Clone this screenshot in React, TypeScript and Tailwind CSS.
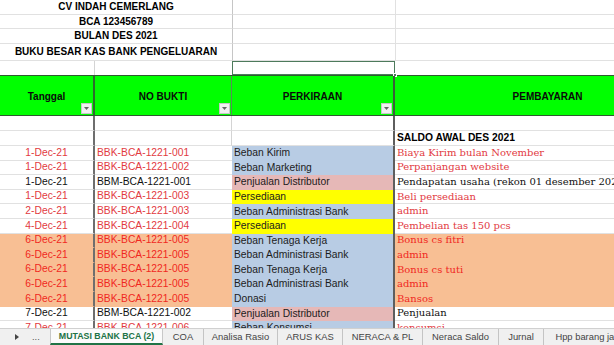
const RED = "text-[#e23a3f]";
const RED_O = "text-[#f0281f]";

type Row = {
  tgl: string;
  bukti: string;
  akun: string;
  akunBg: string;
  bayar: string;
  red: boolean;
  orange?: boolean;
};

const rows: Row[] = [
  { tgl: "1-Dec-21", bukti: "BBK-BCA-1221-001", akun: "Beban Kirim", akunBg: "blue", bayar: "Biaya Kirim bulan November", red: true },
  { tgl: "1-Dec-21", bukti: "BBK-BCA-1221-002", akun: "Beban Marketing", akunBg: "blue", bayar: "Perpanjangan website", red: true },
  { tgl: "1-Dec-21", bukti: "BBM-BCA-1221-001", akun: "Penjualan Distributor", akunBg: "pink", bayar: "Pendapatan usaha (rekon 01 desember 2021)", red: false },
  { tgl: "1-Dec-21", bukti: "BBK-BCA-1221-003", akun: "Persediaan", akunBg: "yellow", bayar: "Beli persediaan", red: true },
  { tgl: "2-Dec-21", bukti: "BBK-BCA-1221-003", akun: "Beban Administrasi Bank", akunBg: "blue", bayar: "admin", red: true },
  { tgl: "4-Dec-21", bukti: "BBK-BCA-1221-004", akun: "Persediaan", akunBg: "yellow", bayar: "Pembelian tas 150 pcs", red: true },
  { tgl: "6-Dec-21", bukti: "BBK-BCA-1221-005", akun: "Beban Tenaga Kerja", akunBg: "blue", bayar: "Bonus cs fitri", red: true, orange: true },
  { tgl: "6-Dec-21", bukti: "BBK-BCA-1221-005", akun: "Beban Administrasi Bank", akunBg: "blue", bayar: "admin", red: true, orange: true },
  { tgl: "6-Dec-21", bukti: "BBK-BCA-1221-005", akun: "Beban Tenaga Kerja", akunBg: "blue", bayar: "Bonus cs tuti", red: true, orange: true },
  { tgl: "6-Dec-21", bukti: "BBK-BCA-1221-005", akun: "Beban Administrasi Bank", akunBg: "blue", bayar: "admin", red: true, orange: true },
  { tgl: "6-Dec-21", bukti: "BBK-BCA-1221-005", akun: "Donasi", akunBg: "blue", bayar: "Bansos", red: true, orange: true },
  { tgl: "7-Dec-21", bukti: "BBM-BCA-1221-002", akun: "Penjualan Distributor", akunBg: "pink", bayar: "Penjualan", red: false },
  { tgl: "7-Dec-21", bukti: "BBK-BCA-1221-006", akun: "Beban Konsumsi", akunBg: "blue", bayar: "konsumsi", red: true },
];

const akunBgClass: Record<string, string> = {
  blue: "bg-[#b8cce4]",
  pink: "bg-[#e6b8b7]",
  yellow: "bg-[#ffff00]",
};

function FilterBtn() {
  return (
    <span className="absolute right-[1px] bottom-[1px] w-[11px] h-[11px] bg-[#f2f2f2] border border-[#c8c8c8] flex items-center justify-center">
      <svg width="5" height="3" viewBox="0 0 5 3">
        <path d="M0 0 L5 0 L2.5 3 Z" fill="#666" />
      </svg>
    </span>
  );
}

const sans = "font-['Liberation_Sans',Arial,sans-serif]";
const serif = "font-['DejaVu_Serif',serif]";

function TitleRow({ text, h }: { text: string; h: string }) {
  return (
    <div className={`flex ${h}`}>
      <div className="w-[232px] shrink-0 border-b border-[#e1e1e1] flex items-center justify-center text-[10px] font-bold text-black">
        {text}
      </div>
      <div className="w-[163px] shrink-0 border-l border-[#c6c6c6] border-b border-b-[#e1e1e1]" />
      <div className="flex-1 border-l border-[#e1e1e1] border-b border-b-[#e1e1e1]" />
    </div>
  );
}

function DataRow({ r }: { r: Row }) {
  const bg = r.orange ? "bg-[#f8bf94] border-transparent" : "bg-white border-[#e1e1e1]";
  const txt = r.red ? (r.orange ? RED_O : RED) : "text-[#111]";
  return (
    <div className="flex h-[14.6px] text-[10.3px] leading-none">
      <div className={`w-[95px] shrink-0 border-b ${bg} border-r-2 border-r-[#6e6e6e] flex items-center justify-center ${txt}`}>
        {r.tgl}
      </div>
      <div className={`w-[137px] shrink-0 border-b ${bg} flex items-center pl-[2px] ${txt}`}>{r.bukti}</div>
      <div className={`w-[163px] shrink-0 ${akunBgClass[r.akunBg]} border-r-2 border-r-[#5e5e5e] flex items-center pl-[2px] text-[#1c1c1c]`}>
        {r.akun}
      </div>
      <div className={`flex-1 border-b ${bg} flex items-center pl-[2px] whitespace-nowrap overflow-hidden ${serif} text-[10px] ${txt}`}>
        {r.bayar}
      </div>
    </div>
  );
}

const tabs = [
  { name: "COA", w: "w-[40px]" },
  { name: "Analisa Rasio", w: "w-[74px]" },
  { name: "ARUS KAS", w: "w-[65px]" },
  { name: "NERACA & PL", w: "w-[80px]" },
  { name: "Neraca Saldo", w: "w-[76px]" },
  { name: "Jurnal", w: "w-[45px]" },
  { name: "Hpp barang jadi", w: "w-[90px]" },
];

export default function App() {
  return (
    <div className={`w-[614px] h-[345px] overflow-hidden bg-white flex flex-col ${sans}`}>
      <div className="h-[328px] overflow-hidden shrink-0">
        <TitleRow text="CV INDAH CEMERLANG" h="h-[14.5px]" />
        <TitleRow text="BCA 123456789" h="h-[14.5px]" />
        <TitleRow text="BULAN DES 2021" h="h-[14.5px]" />
        <TitleRow text="BUKU BESAR KAS BANK PENGELUARAN" h="h-[17.5px]" />
        {/* row 5 with selected cell */}
        <div className="flex h-[14px]">
          <div className="w-[95px] shrink-0 border-r border-[#d4d4d4]" />
          <div className="w-[137px] shrink-0" />
          <div className="w-[163px] shrink-0 relative border-[1.5px] border-[#4d7a5c]">
            <span className="absolute -right-[3px] -bottom-[3px] w-[4px] h-[4px] bg-[#4d7a5c] border border-white" />
          </div>
          <div className="flex-1" />
        </div>

        {/* header */}
        <div className="flex h-[41px] bg-[#00ff00] border-y-[1.5px] border-[#2f5a2f] text-[10px] font-bold text-[#0a0a0a]">
          <div className="w-[95px] shrink-0 relative border-r-2 border-[#2d6a2d] flex items-center justify-center pt-[2px]">
            Tanggal
            <FilterBtn />
          </div>
          <div className="w-[137px] shrink-0 relative border-r border-[#5a8a5a] flex items-center justify-center pt-[2px]">
            NO BUKTI
            <FilterBtn />
          </div>
          <div className="w-[163px] shrink-0 relative border-r-2 border-[#3b5e3b] flex items-center justify-center pt-[2px]">
            PERKIRAAN
            <FilterBtn />
          </div>
          <div className="w-[305px] shrink-0 flex items-center justify-center pt-[2px]">PEMBAYARAN</div>
        </div>

        {/* empty row + saldo */}
        <div className="flex h-[15px]">
          <div className="w-[95px] shrink-0 border-b border-[#e1e1e1] border-r-2 border-r-[#6e6e6e]" />
          <div className="w-[137px] shrink-0 border-b border-[#e1e1e1] border-r border-r-[#d4d4d4]" />
          <div className="w-[163px] shrink-0 border-b border-[#e1e1e1] border-r-2 border-r-[#5e5e5e]" />
          <div className="flex-1 border-b border-[#e1e1e1]" />
        </div>
        <div className="flex h-[15px]">
          <div className="w-[95px] shrink-0 border-b border-[#e1e1e1] border-r-2 border-r-[#6e6e6e]" />
          <div className="w-[137px] shrink-0 border-b border-[#e1e1e1] border-r border-r-[#d4d4d4]" />
          <div className="w-[163px] shrink-0 border-b border-[#e1e1e1] border-r-2 border-r-[#5e5e5e]" />
          <div className="flex-1 border-b border-[#e1e1e1] flex items-center pl-[2px] text-[10.3px] font-bold text-black leading-none">
            SALDO AWAL DES 2021
          </div>
        </div>

        {rows.map((r, i) => (
          <DataRow key={i} r={r} />
        ))}
      </div>

      {/* sheet tabs */}
      <div className="flex-1 flex items-stretch bg-[#f0f0f0] border-t border-[#d0d0d0] text-[9.4px] text-[#444] whitespace-nowrap overflow-hidden leading-none">
        <div className="w-[50px] shrink-0 flex items-center">
          <svg width="4" height="6" viewBox="0 0 4 6" className="ml-[15px]">
            <path d="M0 0 L4 3 L0 6 Z" fill="#444" />
          </svg>
          <span className="ml-[13px] text-[#555]">...</span>
        </div>
        <div className="w-[113px] shrink-0 bg-[#fbfbfb] border-x border-[#c8c8c8] border-b-2 border-b-[#217346] flex items-center justify-center text-[8.8px] font-bold text-[#217346]">
          MUTASI BANK BCA (2)
        </div>
        {tabs.map((t, i) => (
          <div
            key={t.name}
            className={`${t.w} shrink-0 flex items-center justify-center ${i > 0 ? "border-l border-[#c4c4c4]" : ""}`}
          >
            {t.name}
          </div>
        ))}
      </div>
    </div>
  );
}
